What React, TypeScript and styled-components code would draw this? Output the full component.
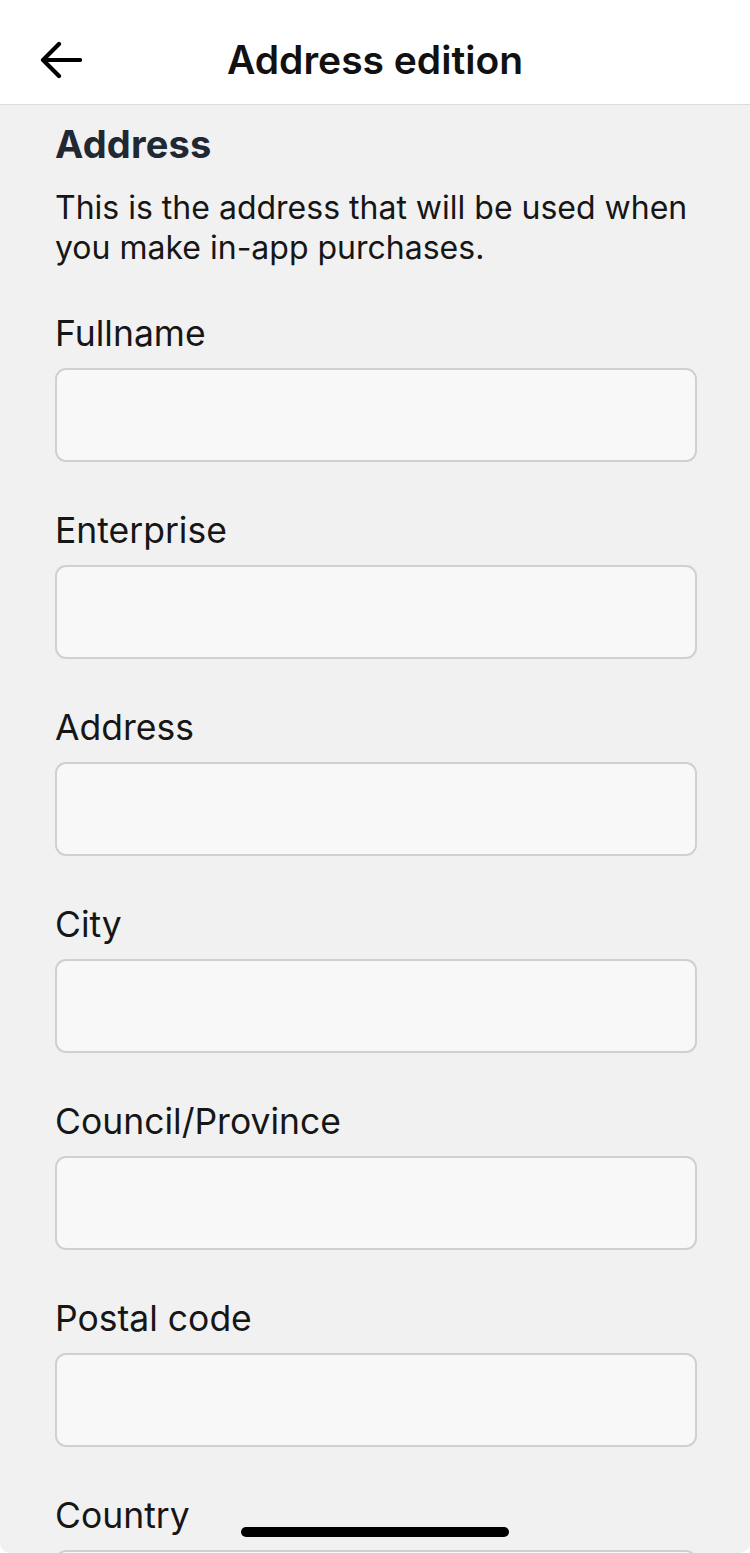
import React from "react";
import styled, { createGlobalStyle } from "styled-components";

const GlobalStyle = createGlobalStyle`
  html, body {
    margin: 0;
    padding: 0;
    background: #ffffff;
  }
  * { box-sizing: border-box; }
  body {
    font-family: Inter, "Noto Sans", Roboto, sans-serif;
    -webkit-font-smoothing: antialiased;
  }
`;

const Screen = styled.div`
  width: 750px;
  height: 1553px;
  overflow: hidden;
  background: #f1f1f1;
  border-radius: 0 0 10px 10px;
  position: relative;
  display: flex;
  flex-direction: column;
`;

const Header = styled.header`
  height: 105px;
  flex-shrink: 0;
  background: #ffffff;
  border-bottom: 1px solid #dcdcdc;
  padding-top: 16px;
  display: flex;
  align-items: center;
  justify-content: center;
  position: relative;
`;

const BackButton = styled.button`
  position: absolute;
  left: 36px;
  top: 38px;
  width: 48px;
  height: 44px;
  padding: 0;
  border: none;
  background: transparent;
  display: flex;
  align-items: center;
  justify-content: center;
  cursor: pointer;
`;

const Title = styled.h1`
  margin: 0;
  font-size: 39px;
  line-height: 48px;
  font-weight: 600;
  color: #111111;
  letter-spacing: 0;
`;

const Content = styled.main`
  padding: 17px 45px 0 55px;
  display: flex;
  flex-direction: column;
`;

const SectionTitle = styled.h2`
  margin: 0;
  font-size: 38px;
  line-height: 44px;
  font-weight: 700;
  color: #1f2833;
  letter-spacing: 0.2px;
`;

const Description = styled.p`
  margin: 22px 0 0;
  font-size: 32px;
  line-height: 40px;
  font-weight: 400;
  color: #161616;
  letter-spacing: 0;
`;

const Fields = styled.div`
  margin-top: 46px;
  display: flex;
  flex-direction: column;
  gap: 49px;
`;

const Field = styled.label`
  display: flex;
  flex-direction: column;
  gap: 14px;
`;

const FieldLabel = styled.span`
  font-size: 35.5px;
  line-height: 40px;
  font-weight: 400;
  color: #161616;
  letter-spacing: 0;
`;

const Input = styled.input`
  width: 642px;
  height: 94px;
  border: 2px solid #d0d0d0;
  border-radius: 11px;
  background: #f8f8f8;
  font-family: inherit;
  font-size: 30px;
  padding: 0 20px;
  outline: none;
`;

const HomeIndicator = styled.div`
  position: absolute;
  left: 241px;
  bottom: 16px;
  width: 268px;
  height: 10px;
  border-radius: 5px;
  background: #000000;
`;

const fields = [
  "Fullname",
  "Enterprise",
  "Address",
  "City",
  "Council/Province",
  "Postal code",
  "Country",
];

export default function App() {
  return (
    <>
      <GlobalStyle />
      <Screen>
        <Header>
          <BackButton aria-label="Back">
            <svg width="44" height="40" viewBox="0 0 44 40" fill="none">
              <path
                d="M5 20 H42 M21 4 L5 20 L21 36"
                stroke="#000"
                strokeWidth="4.2"
                strokeLinecap="round"
                strokeLinejoin="round"
              />
            </svg>
          </BackButton>
          <Title>Address edition</Title>
        </Header>
        <Content>
          <SectionTitle>Address</SectionTitle>
          <Description>
            This is the address that will be used when you make in-app
            purchases.
          </Description>
          <Fields>
            {fields.map((f) => (
              <Field key={f}>
                <FieldLabel>{f}</FieldLabel>
                <Input type="text" />
              </Field>
            ))}
          </Fields>
        </Content>
        <HomeIndicator />
      </Screen>
    </>
  );
}
